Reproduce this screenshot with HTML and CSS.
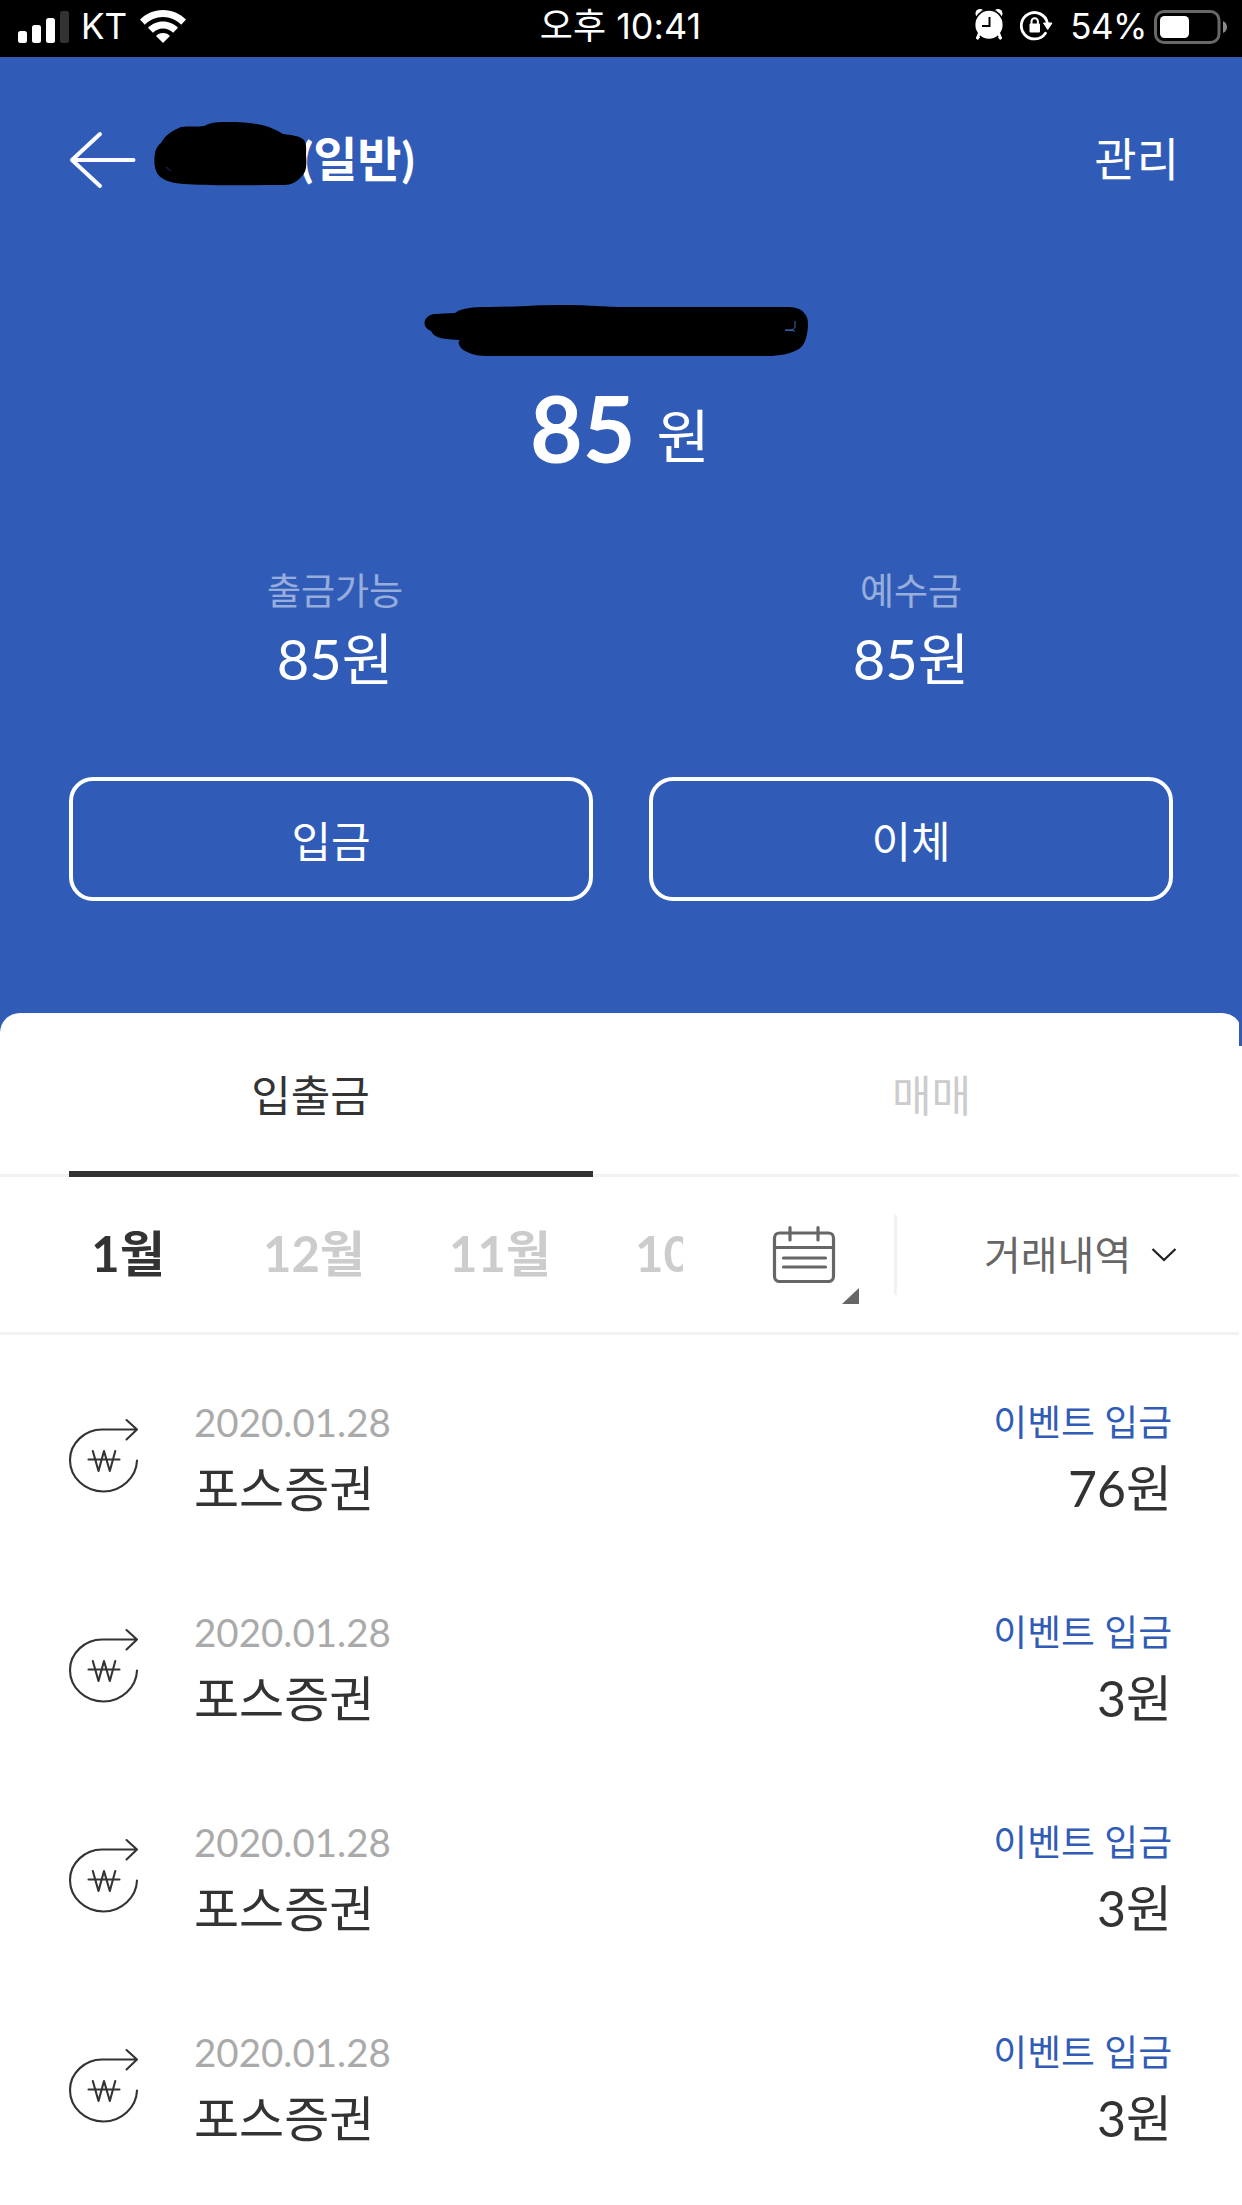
FILE: index.html
```html
<!DOCTYPE html>
<html lang="ko">
<head>
<meta charset="utf-8">
<title>계좌 상세</title>
<link rel="stylesheet" href="styles.css">
</head>
<body>
<svg class="defs" width="0" height="0">
  <symbol id="deposit" viewBox="0 0 72 76">
    <g fill="none" stroke="#333" stroke-width="2.1" stroke-linecap="round" stroke-linejoin="round">
      <path d="M69 42.500C68.500 59 53.500 73.500 35.500 73.500C17 73.500 2 59.500 2 42C2 25 17 11.500 34 11.500H69M58.500 2L69 11.500L58.500 21.500"/>
      <path d="M20.500 41.500H51.500M24.800 33L30.500 53L36 33L41.800 53L47.300 33"/>
    </g>
  </symbol>
</svg>

<div class="status">
  <div class="status-left">
    <svg width="51" height="32" viewBox="0 0 51 32"><g fill="#fff"><rect y="20" width="9" height="12" rx="2.500"/><rect x="14" y="14" width="9" height="18" rx="2.500"/><rect x="28" y="7" width="9" height="25" rx="2.500"/></g><rect x="42" width="9" height="32" rx="2.500" fill="#333"/></svg>
    <span class="carrier">KT</span>
    <svg width="46" height="33" viewBox="0 0 46 33" fill="#fff"><path d="M23 0C14 0 6 3.500 0 9.600L4.800 14.800C9.500 10 16 7 23 7S36.500 10 41.200 14.800L46 9.600C40 3.500 32 0 23 0Z"/><path d="M23 11.500C17 11.500 12 14 8 17.700L12.900 22.800C15.500 20.300 19 18.500 23 18.500S30.500 20.300 33.100 22.800L38 17.700C34 14 29 11.500 23 11.500Z"/><path d="M23 23C20 23 17.800 24.300 16 26L23 33L30 26C28.200 24.300 26 23 23 23Z"/></svg>
  </div>
  <div class="clock">오후 10:41</div>
  <div class="status-right">
    <svg class="alarm" width="28" height="31" viewBox="0 0 28 31"><g stroke="#fff" stroke-width="2.800" stroke-linecap="round"><path d="M5 26L2.500 29M23 26L25.500 29"/></g><g fill="#fff"><circle cx="5" cy="4.500" r="4.500"/><circle cx="23" cy="4.500" r="4.500"/></g><ellipse cx="14" cy="15.800" rx="15" ry="16" fill="#000"/><path d="M4 25L2.500 29M24 25L25.500 29" stroke="#fff" stroke-width="2.800" stroke-linecap="round"/><ellipse cx="14" cy="15.800" rx="13.600" ry="14" fill="#fff"/><path d="M14.500 8V17H7" fill="none" stroke="#000" stroke-width="2"/></svg>
    <svg class="lock" width="33" height="30" viewBox="0 0 33 30"><path d="M25.400 22.200A13.200 13.200 0 1 1 27.400 12" fill="none" stroke="#fff" stroke-width="2.800" stroke-linecap="round"/><path d="M23.500 12H32L27.700 18.500Z" fill="#fff" stroke="#fff" stroke-linejoin="round"/><rect x="9.500" y="12.500" width="10.500" height="9" rx="1" fill="#fff"/><path d="M11.500 13V10.500A3.200 3.200 0 0 1 17.900 10.500V13" fill="none" stroke="#fff" stroke-width="2"/></svg>
    <span class="percent">54%</span>
    <svg width="74" height="34" viewBox="0 0 74 34"><rect x="1.500" y="1.500" width="63.500" height="31" rx="8.500" fill="none" stroke="#686868" stroke-width="3"/><rect x="6" y="6" width="29" height="22" rx="4.500" fill="#fff"/><path d="M69 11Q73 13 73 17T69 23Z" fill="#888"/></svg>
  </div>
</div>

<header class="hero">
  <div class="nav">
    <svg width="68" height="58" viewBox="0 0 68 58" fill="none" stroke="#fff" stroke-width="4" stroke-linecap="round" stroke-linejoin="round"><path d="M64.500 29H3M31 3L3 29L31 55"/></svg>
    <h1>(일반)<svg class="name-mask" width="154" height="66" viewBox="0 0 154 66"><path d="M1 31C2 26 4 23 7 21C11 13 18 9 27 5C34 4 43 5 50 4C57 0 64 0 76 0C98 0 115 3 129 12C138 13 146 14 150 18C153 22 152 28 152 33C153 44 152 50 148 54C143 60 137 63 130 63C105 63 50 64 30 62C15 61 5 57 2 49C0 43 0 37 1 31Z"/><path d="M12 45L17 49" stroke="#193364" stroke-width="1"/></svg></h1>
    <span class="manage">관리</span>
  </div>
  <svg class="account-mask" width="384" height="52" viewBox="0 0 384 52"><path d="M10 9L31 8C37 3 48 2 65 2C90 2 110 0 140 0C167 0 180 2 200 2H361C370 2 377 3 380 8C384 12 384 16 384 22C383 32 381 40 375 44C366 49 355 51 344 51H62C50 51 46 48 41 46C35 43 33 37 36 35C20 34 11 34 7 26C-3 22-1 11 10 9Z"/><path d="M371 16V22C370 25 367 25 361 25L371 26" fill="none" stroke="#3e67b8" stroke-width="1"/></svg>
  <div class="balance"><strong>85</strong><span>원</span></div>
  <div class="summary">
    <div><div class="label">출금가능</div><div class="value">85원</div></div>
    <div><div class="label">예수금</div><div class="value">85원</div></div>
  </div>
  <div class="actions"><div class="action">입금</div><div class="action">이체</div></div>
</header>

<main class="sheet">
  <div class="sheet-top">
    <div class="tab active">입출금</div>
    <div class="tab">매매</div>
  </div>
  <div class="filters">
    <div class="months"><span class="current">1월</span><span>12월</span><span>11월</span><span>10월</span></div>
    <svg class="calendar" width="88" height="80" viewBox="0 0 88 80"><g fill="none" stroke="#666" stroke-width="3.200" stroke-linecap="round"><rect x="3.500" y="9" width="59" height="48.500" rx="5"/><path d="M4 23.500H62M19 3.500V16M47 3.500V16M12.500 34H54.500M12.500 43H54.500"/></g><path d="M88 64V80H71Z" fill="#666"/></svg>
    <div class="type">거래내역<svg width="26" height="16" viewBox="0 0 26 16" fill="none" stroke="#222" stroke-width="2.300"><path d="M1.500 2L13 13L24.500 2"/></svg></div>
  </div>
  <div class="history">
    <div class="entry"><svg class="icon"><use href="#deposit"/></svg><div class="who"><div class="date">2020.01.28</div><div class="name">포스증권</div></div><div class="sum"><div class="kind">이벤트 입금</div><div class="won">76원</div></div></div>
    <div class="entry"><svg class="icon"><use href="#deposit"/></svg><div class="who"><div class="date">2020.01.28</div><div class="name">포스증권</div></div><div class="sum"><div class="kind">이벤트 입금</div><div class="won">3원</div></div></div>
    <div class="entry"><svg class="icon"><use href="#deposit"/></svg><div class="who"><div class="date">2020.01.28</div><div class="name">포스증권</div></div><div class="sum"><div class="kind">이벤트 입금</div><div class="won">3원</div></div></div>
    <div class="entry"><svg class="icon"><use href="#deposit"/></svg><div class="who"><div class="date">2020.01.28</div><div class="name">포스증권</div></div><div class="sum"><div class="kind">이벤트 입금</div><div class="won">3원</div></div></div>
  </div>
</main>
</body>
</html>
```
FILE: styles.css
```css
* { box-sizing: border-box; }
body {
  margin: 0;
  width: 1242px;
  height: 2205px;
  overflow: hidden;
  background: #fff;
  color: #333;
  font-family: Lato, "Noto Sans CJK KR", sans-serif;
}
svg { display: block; flex: none; }
.defs { position: absolute; }

/* Status bar */
.status {
  display: grid;
  grid-template-columns: 1fr auto 1fr;
  height: 57px;
  padding: 0 14px 4px 18px;
  background: #000;
  color: #fff;
  font: 35px/53px Inter, "Noto Sans CJK KR", sans-serif;
}
.status-left, .status-right { display: flex; align-items: center; }
.status-right { justify-content: flex-end; }
.carrier { margin: 0 13px 0 12px; }
.clock { margin-right: 5px; font-size: 36px; }
.alarm { margin-top: -4px; }
.lock { margin: -2px 17px 0; }
.percent { margin-right: 7px; letter-spacing: -0.5px; }

/* Account header */
.hero { height: 989px; background: #305cb8; color: #fff; }
.nav { display: flex; align-items: center; height: 202px; padding: 4px 63px 0 69px; }
.nav h1 {
  position: relative;
  margin: -2px 0 0 163px;
  font-size: 48px;
  line-height: 60px;
  font-weight: 700;
}
.name-mask { position: absolute; left: -146px; top: -7px; }
.manage { margin: -2px 0 0 auto; font-size: 46px; line-height: 60px; }
.account-mask { margin: 46px 0 0 424px; }
.balance {
  display: flex;
  justify-content: center;
  gap: 21px;
  height: 100px;
  margin: 21px 2px 0 0;
  line-height: 100px;
}
.balance strong { font-size: 91px; font-weight: 700; }
.balance span { margin-top: 8px; font-size: 58px; }
.summary {
  display: grid;
  grid-template-columns: 576px 576px;
  margin: 88px 0 0 47px;
  text-align: center;
}
.label { font-size: 37px; line-height: 50px; color: rgba(255, 255, 255, .5); }
.value { margin-top: 13px; font-size: 56px; line-height: 60px; }
.actions { display: flex; gap: 56px; margin: 88px 69px 0; }
.action {
  flex: 1;
  height: 124px;
  border: 4px solid #fff;
  border-radius: 24px;
  text-align: center;
  font-size: 43px;
  line-height: 122px;
}

/* White sheet overlapping the header */
.sheet { position: relative; width: 1239px; margin-top: -33px; overflow: hidden; }
.sheet-top {
  display: flex;
  width: 1242px;
  height: 164px;
  border-bottom: 3px solid #f2f2f2;
  border-radius: 20px 20px 0 0;
  background: #fff;
}
.tab { flex: 1; height: 164px; font-size: 43px; line-height: 165px; text-align: center; color: #ccc; }
.tab.active { color: #333; }
.tab.active::after {
  content: "";
  display: block;
  width: 524px;
  height: 6px;
  margin: -7px 0 0 69px;
  background: #333;
}
.filters {
  display: flex;
  align-items: center;
  height: 158px;
  border-bottom: 3px solid #f2f2f2;
}
.months {
  display: flex;
  width: 648px;
  margin-left: 35px;
  overflow: hidden;
  color: #ccc;
  font-size: 49px;
  line-height: 70px;
  font-weight: 700;
}
.months span { flex: 0 0 186px; margin-top: -4px; text-align: center; }
.months .current { color: #333; }
.calendar { margin: 18px 0 0 88px; }
.type {
  display: flex;
  align-items: center;
  gap: 20px;
  height: 80px;
  margin-left: 35px;
  padding-left: 87px;
  border-left: 3px solid #f2f2f2;
  color: #666;
  font-size: 40px;
  line-height: 80px;
}

/* Transactions */
.history { padding: 62px 67px 0 68px; }
.entry { display: flex; height: 210px; }
.icon { width: 72px; height: 76px; margin-top: 21px; }
.who { margin-left: 54px; }
.date { font-size: 38.5px; line-height: 50px; color: #aaa; }
.name, .won { margin-top: 11px; font-size: 49px; line-height: 60px; }
.sum { margin-left: auto; text-align: right; }
.kind { font-size: 36.8px; line-height: 51px; color: #305cb8; }
.won { margin-top: 10px; font-size: 50px; }
```
